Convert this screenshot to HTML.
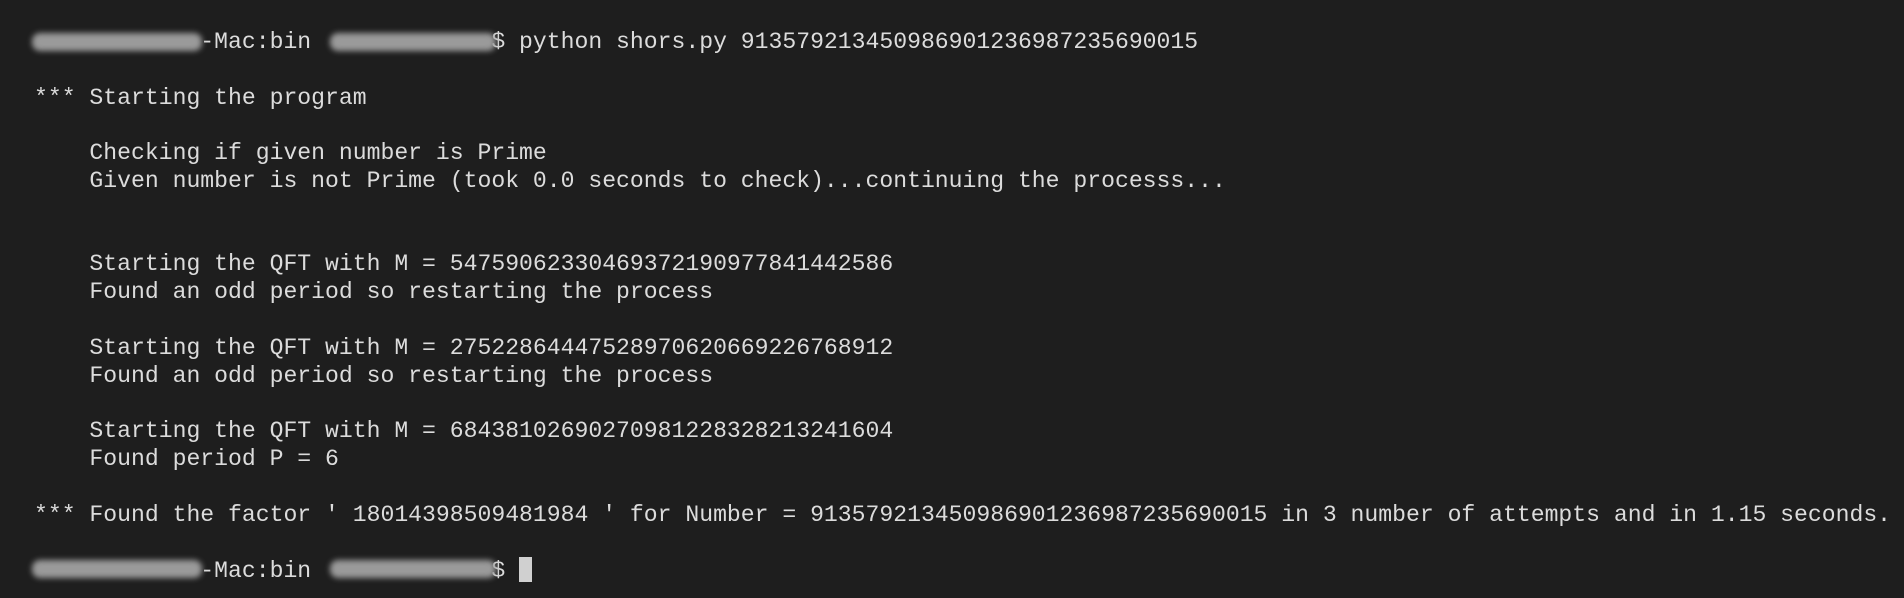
<!DOCTYPE html>
<html><head><meta charset="utf-8"><style>
html,body{margin:0;padding:0;background:#1e1e1e;width:1904px;height:598px;overflow:hidden}
pre{margin:0;position:absolute;left:34px;top:29px;font-family:"Liberation Mono",monospace;font-size:23.1px;line-height:27.8px;color:#dcdcdc;white-space:pre}
.blur{position:absolute;height:18px;background:#9a9a9a;filter:blur(3px);border-radius:8px}
.cur{display:inline-block;width:13px;height:25px;background:#d0d0d0;vertical-align:-5px}
</style></head><body>
<pre>            -Mac:bin             $ python shors.py 913579213450986901236987235690015

*** Starting the program

    Checking if given number is Prime
    Given number is not Prime (took 0.0 seconds to check)...continuing the processs...


    Starting the QFT with M = 547590623304693721909778414425 86
    Found an odd period so restarting the process

    Starting the QFT with M = 275228644475289706206692267689 12
    Found an odd period so restarting the process

    Starting the QFT with M = 684381026902709812283282132416 04
    Found period P = 6

*** Found the factor ' 18014398509481984 ' for Number = 913579213450986901236987235690015 in 3 number of attempts and in 1.15 seconds.

            -Mac:bin             $ <span class="cur"></span></pre>
<div class="blur" style="left:32px;top:33px;width:170px"></div>
<div class="blur" style="left:330px;top:33px;width:166px"></div>
<div class="blur" style="left:32px;top:560px;width:170px"></div>
<div class="blur" style="left:330px;top:560px;width:166px"></div>
<script>
document.querySelector('pre').innerHTML=document.querySelector('pre').innerHTML.replace(/(\d{30}) (\d\d)/g,'$1$2');
</script>
</body></html>
